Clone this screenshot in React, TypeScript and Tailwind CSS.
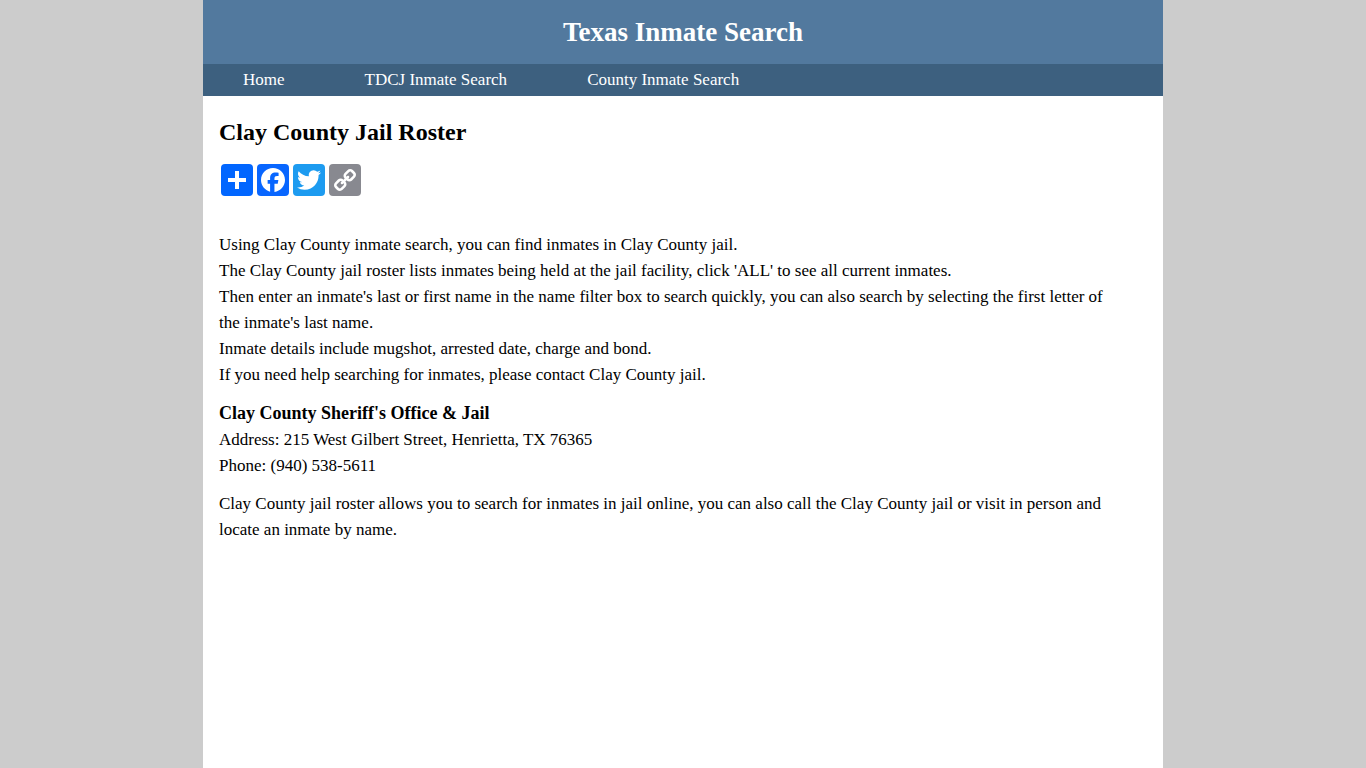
import React from 'react';

interface NavItem {
  label: string;
  href: string;
}

interface ShareButtonProps {
  label: string;
  href: string;
  className?: string;
  children: React.ReactNode;
}

const navItems: NavItem[] = [
  { label: 'Home', href: '#home' },
  { label: 'TDCJ Inmate Search', href: '#tdcj' },
  { label: 'County Inmate Search', href: '#county' },
];

const ShareButton: React.FC<ShareButtonProps> = ({ label, href, className = '', children }) => (
  <a href={href} aria-label={label} className={`block size-8 rounded-sm ${className}`}>
    <svg className="size-8" viewBox="0 0 32 32" fill="#fff" aria-hidden="true">
      {children}
    </svg>
  </a>
);

const ShareBar: React.FC = () => (
  <div className="flex gap-1 px-0.5">
    <ShareButton label="Share" href="#share" className="bg-[#0166ff]">
      <path d="M14 7h4v18h-4z" />
      <path d="M7 14h18v4H7z" />
    </ShareButton>
    <ShareButton label="Facebook" href="#facebook" className="bg-[#0866ff]">
      <path d="M28 16c0-6.627-5.373-12-12-12S4 9.373 4 16c0 5.628 3.875 10.35 9.101 11.647v-7.98h-2.474V16H13.1v-1.58c0-4.085 1.849-5.978 5.859-5.978.76 0 2.072.15 2.608.298v3.325c-.283-.03-.775-.045-1.386-.045-1.967 0-2.728.745-2.728 2.683V16h3.92l-.673 3.667h-3.247v8.245C23.395 27.195 28 22.135 28 16" />
    </ShareButton>
    <ShareButton label="Twitter" href="#twitter" className="bg-[#1d9bf0]">
      <path d="M28 8.557a10 10 0 0 1-2.828.775 4.93 4.93 0 0 0 2.166-2.725 9.7 9.7 0 0 1-3.13 1.194 4.92 4.92 0 0 0-3.593-1.55 4.924 4.924 0 0 0-4.794 6.049c-4.09-.21-7.72-2.17-10.15-5.15a4.94 4.94 0 0 0-.665 2.477c0 1.71.87 3.214 2.19 4.1a5 5 0 0 1-2.23-.616v.06c0 2.39 1.7 4.38 3.952 4.83-.414.115-.85.174-1.297.174q-.476-.001-.928-.086a4.935 4.935 0 0 0 4.6 3.42 9.9 9.9 0 0 1-6.114 2.107q-.597 0-1.175-.068a13.95 13.95 0 0 0 7.55 2.213c9.056 0 14.01-7.507 14.01-14.013q0-.32-.015-.637c.96-.695 1.795-1.56 2.455-2.55z" />
    </ShareButton>
    <ShareButton label="Copy Link" href="#copy" className="bg-[#888990]">
      <path
        transform="matrix(-1 0 0 1 32 0)"
        d="M24.412 21.177c0-.36-.126-.665-.377-.917l-2.804-2.804a1.235 1.235 0 0 0-.913-.378c-.377 0-.7.144-.97.43.026.028.11.11.255.25.144.14.24.236.29.29s.117.14.2.256c.087.117.146.232.177.344.03.112.046.236.046.37 0 .36-.126.666-.377.918a1.25 1.25 0 0 1-.918.377 1.4 1.4 0 0 1-.373-.047 1.062 1.062 0 0 1-.345-.175 2.268 2.268 0 0 1-.256-.2 6.815 6.815 0 0 1-.29-.29c-.14-.142-.223-.23-.25-.254-.297.28-.445.607-.445.984 0 .36.126.664.377.916l2.778 2.79c.243.243.548.364.917.364.36 0 .665-.118.917-.35l1.982-1.97c.252-.25.378-.55.378-.9zm-9.477-9.504c0-.36-.126-.665-.377-.917l-2.777-2.79a1.235 1.235 0 0 0-.913-.378c-.35 0-.656.12-.917.364L7.967 9.92c-.254.252-.38.553-.38.903 0 .36.126.665.38.917l2.802 2.804c.242.243.547.364.916.364.377 0 .7-.14.97-.418-.026-.027-.11-.11-.255-.25s-.24-.235-.29-.29a2.675 2.675 0 0 1-.2-.255 1.052 1.052 0 0 1-.176-.344 1.396 1.396 0 0 1-.047-.37c0-.36.126-.662.377-.914.252-.252.557-.377.917-.377.136 0 .26.015.37.046.114.03.23.09.346.175.117.085.202.153.256.2.054.05.15.148.29.29.14.146.222.23.25.258.294-.278.442-.606.442-.983zM27 21.177c0 1.078-.382 1.99-1.146 2.736l-1.982 1.968c-.745.75-1.658 1.12-2.736 1.12-1.087 0-2.004-.38-2.75-1.143l-2.777-2.79c-.75-.747-1.12-1.66-1.12-2.737 0-1.106.392-2.046 1.183-2.818l-1.186-1.185c-.774.79-1.708 1.186-2.805 1.186-1.078 0-1.995-.376-2.75-1.13l-2.803-2.81C5.377 12.82 5 11.903 5 10.826c0-1.08.382-1.993 1.146-2.738L8.128 6.12C8.873 5.372 9.785 5 10.864 5c1.087 0 2.004.382 2.75 1.146l2.777 2.79c.75.747 1.12 1.66 1.12 2.737 0 1.105-.392 2.045-1.183 2.817l1.186 1.186c.774-.79 1.708-1.186 2.805-1.186 1.078 0 1.995.377 2.75 1.132l2.804 2.804c.754.755 1.13 1.672 1.13 2.75z"
      />
    </ShareButton>
  </div>
);

export default function App() {
  return (
    <div className="min-h-screen bg-[#cccccc] font-[Georgia,'Liberation_Serif',serif] text-[17px] text-black">
      <div className="mx-auto min-h-screen max-w-[960px] bg-white">
        <header className="flex h-16 items-center justify-center bg-[#52799e] text-white">
          <div className="text-[27px] font-bold">Texas Inmate Search</div>
        </header>

        <nav className="flex bg-[#3d607f] text-white">
          {navItems.map((item) => (
            <a key={item.label} href={item.href} className="px-10 leading-8 hover:underline">
              {item.label}
            </a>
          ))}
        </nav>

        <main className="px-4 pt-5">
          <h1 className="mb-4 text-2xl leading-8 font-bold">Clay County Jail Roster</h1>
          <ShareBar />

          <div className="mt-9 space-y-3 leading-[26px]">
            <p>
              Using Clay County inmate search, you can find inmates in Clay County jail.
              <br />
              The Clay County jail roster lists inmates being held at the jail facility, click 'ALL' to see all current inmates.
              <br />
              Then enter an inmate's last or first name in the name filter box to search quickly, you can also search by selecting the first letter of the&nbsp;inmate's last name.
              <br />
              Inmate details include mugshot, arrested date, charge and bond.
              <br />
              If you need help searching for inmates, please contact Clay County jail.
            </p>
            <p>
              <strong className="text-lg leading-[26px]">Clay County Sheriff's Office &amp; Jail</strong>
              <br />
              Address: 215 West Gilbert Street, Henrietta, TX 76365
              <br />
              Phone: (940) 538-5611
            </p>
            <p>
              Clay County jail roster allows you to search for inmates in jail online, you can also call the Clay County jail or visit in person and locate&nbsp;an inmate by name.
            </p>
          </div>
        </main>
      </div>
    </div>
  );
}
